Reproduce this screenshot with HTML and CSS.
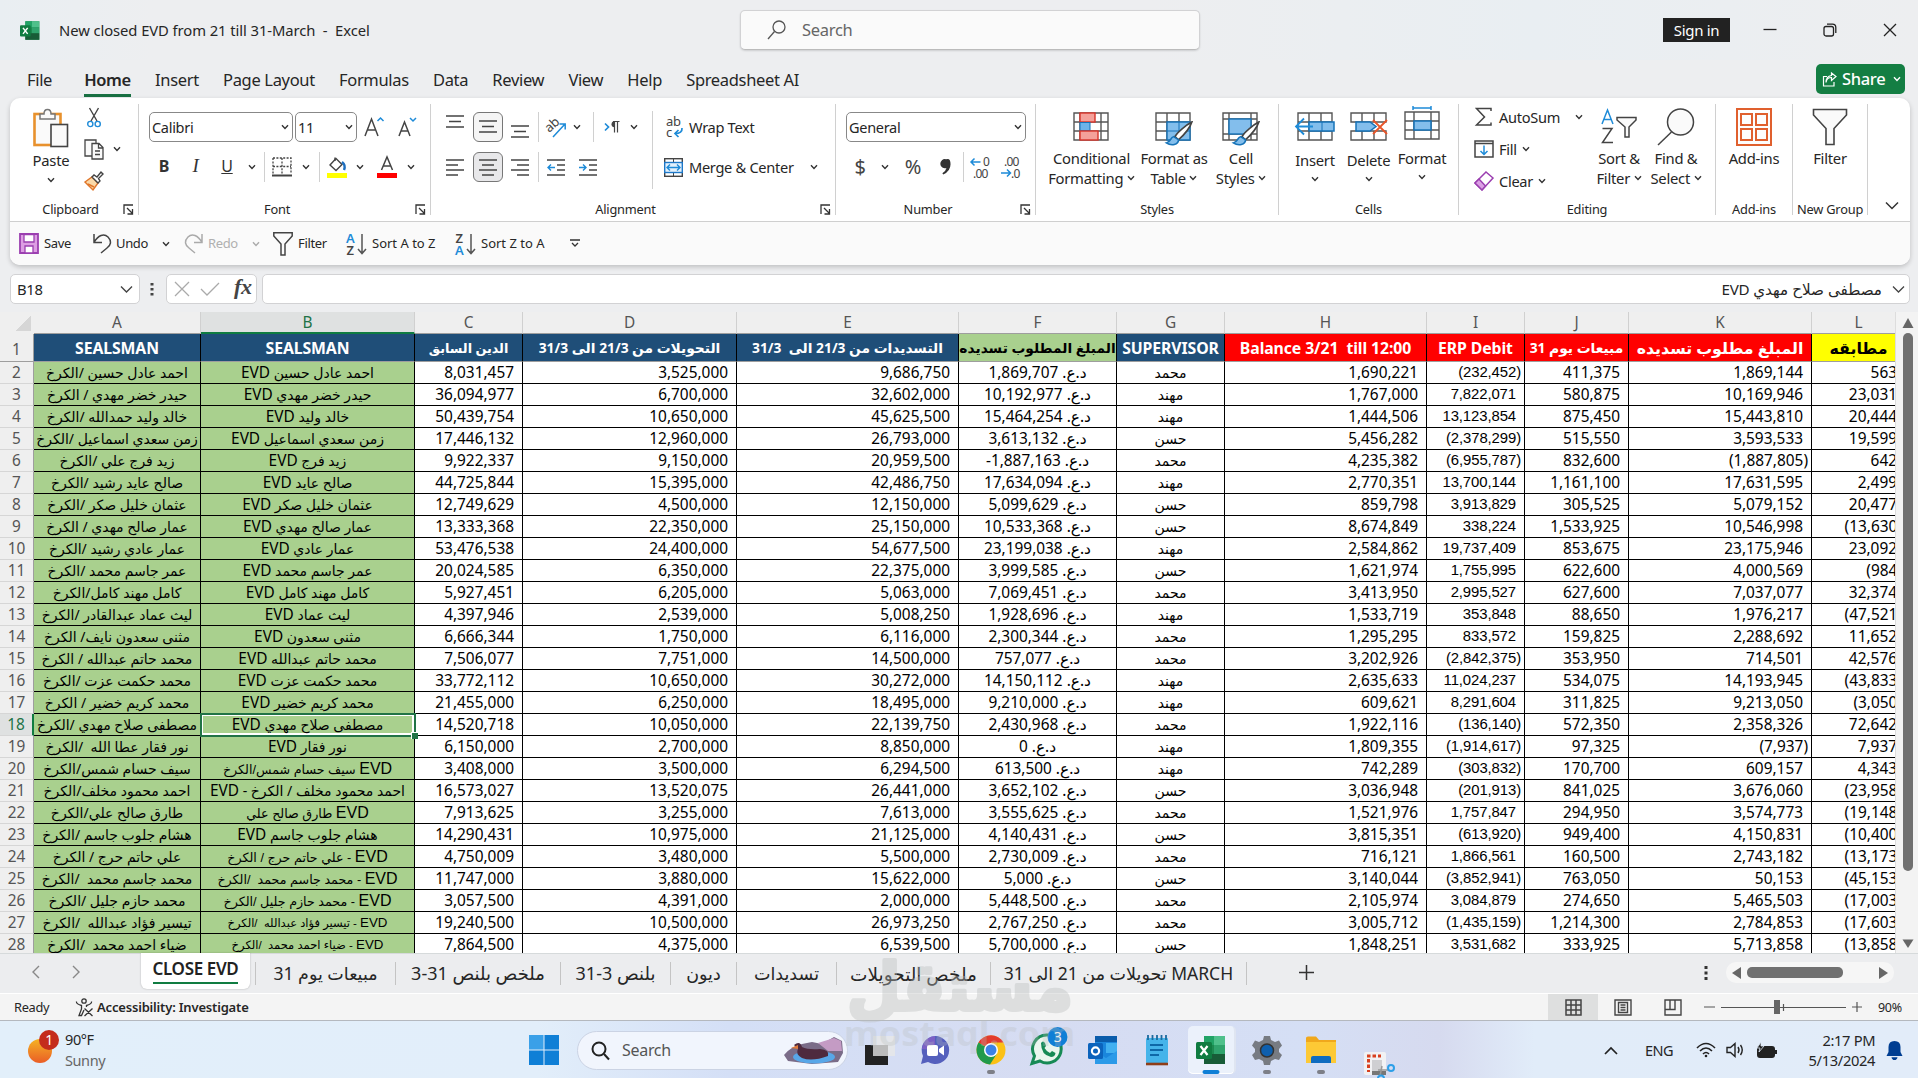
FILE: index.html
```html
<!DOCTYPE html>
<html lang="en">
<head>
<meta charset="utf-8">
<title>New closed EVD from 21 till 31-March - Excel</title>
<link rel="stylesheet" href="styles.css">
</head>
<body>
<svg class="defs" width="0" height="0">
  <symbol id="car" viewBox="0 0 8 6"><path d="M1 1.2 4 4.4 7 1.2" fill="none" stroke="currentColor" stroke-width="1.4"/></symbol>
  <symbol id="launch" viewBox="0 0 11 11"><path d="M1 10V1H10M4 4l5.500 5.500M9.500 5v5h-5" fill="none" stroke="#333" stroke-width="1.300"/></symbol>
  <symbol id="funnel" viewBox="0 0 36 38"><path d="M1.500 1.500H34.500V7L22 20.500V36.500H14V20.500L1.500 7Z" fill="#fafafa" stroke="#444" stroke-width="1.600"/></symbol>
  <symbol id="xl" viewBox="0 0 30 30"><path d="M8 1H29V29H8Z" fill="#1d8a50"/><path d="M18 1H29V10H18Z" fill="#4fc08b"/><path d="M8 1H18V10H8Z" fill="#21a366"/><path d="M18 10H29V19H18Z" fill="#2fa36c"/><path d="M8 19H29V29H8Z" fill="#185c37"/><rect x="0" y="7" width="16" height="17" rx="1.500" fill="#107c41"/><path d="M4.500 11 11.500 20M11.500 11 4.500 20" stroke="#fff" stroke-width="2.200"/></symbol>
  <symbol id="brush" viewBox="0 0 24 24"><path d="M23 1C18 4 11 11 9 15L12 18C16 14 21 8 23 1Z" fill="#fff" stroke="#444" stroke-width="1.500"/><path d="M8 15C5 16 6 20 2 21 6 24 12 23 12 18Z" fill="#83beec" stroke="#1673b8" stroke-width="1.400"/></symbol>
</svg>

<header class="titlebar">
  <svg class="app" width="20" height="21" viewBox="0 0 30 30"><use href="#xl"/></svg>
  <span class="doc">New closed EVD from 21 till 31-March&nbsp; -&nbsp; Excel</span>
  <div class="search"><svg width="20" height="20" viewBox="0 0 20 20" fill="none" stroke="#555" stroke-width="1.300"><circle cx="12" cy="7" r="6"/><path d="M7.500 11.500 1 19"/></svg><span>Search</span></div>
  <span class="signin">Sign in</span>
  <div class="winbtns">
    <svg width="14" height="14" viewBox="0 0 14 14"><path d="M.5 6.500H13.500" stroke="#222" stroke-width="1.300"/></svg>
    <svg width="14" height="14" viewBox="0 0 14 14" fill="none" stroke="#222" stroke-width="1.300"><rect x="1" y="3.500" width="9.500" height="9.500" rx="2"/><path d="M4 1.200H9.500Q12.800 1.200 12.800 4.500V10"/></svg>
    <svg width="14" height="14" viewBox="0 0 14 14"><path d="M1 1 13 13M13 1 1 13" stroke="#222" stroke-width="1.300"/></svg>
  </div>
</header>

<nav class="menu">
  <span class="file">File</span><span class="on">Home</span><span>Insert</span><span>Page Layout</span><span>Formulas</span><span>Data</span><span>Review</span><span>View</span><span>Help</span><span>Spreadsheet AI</span>
  <div class="share"><svg width="15" height="15" viewBox="0 0 15 15" fill="none" stroke="#fff" stroke-width="1.200"><path d="M5 4.500H1.500V14H12V10M4 10.500C4.500 7 7 5.500 9.500 5.500V8.500L14 4.500 9.500 1V3.500C6 4 4 6.500 4 10.500Z"/></svg><b>Share</b><svg class="car"><use href="#car"/></svg></div>
</nav>

<section class="ribbon">
  <div class="groups">
    <div class="group g-clip">
      <div class="body">
        <div class="big paste">
          <svg width="36" height="40" viewBox="0 0 36 40"><rect x="1.500" y="6" width="26" height="31" fill="#fafafa" stroke="#e8912d" stroke-width="2.600"/><path d="M7 11V6H11Q11 1.500 14.500 1.500T18 6H22V11Z" fill="#fafafa" stroke="#777" stroke-width="1.500"/><rect x="18" y="16.500" width="16.500" height="22" fill="#fafafa" stroke="#444" stroke-width="1.600"/></svg>
          <span>Paste</span><svg class="car"><use href="#car"/></svg>
        </div>
        <div class="clipcol">
          <svg width="14" height="21" viewBox="0 0 14 21" fill="none" stroke-width="1.400"><path d="M2.500 1 10 14M11.500 1 4 14" stroke="#444"/><circle cx="3.300" cy="17" r="2.600" stroke="#1e8bd8"/><circle cx="10.700" cy="17" r="2.600" stroke="#1e8bd8"/></svg>
          <svg width="20" height="21" viewBox="0 0 20 21" fill="#fafafa" stroke="#444" stroke-width="1.300"><path d="M8 17H1V1H12V4"/><path d="M8 4.500H15L19 8.500V20H8ZM14.500 4.500V9H19M11 12H16M11 15.500H16" /></svg>
          <svg width="20" height="20" viewBox="0 0 20 20" stroke-width="1.400"><path d="M1 11 8 6 14 12 9 19Z" fill="#fbd9a8" stroke="#e0762a"/><path d="M8 6 10 4 13 6 17 1 19 3 14.500 7.500 16 10 14 12Z" fill="#fff" stroke="#444"/><path d="M4 13 10 16" stroke="#e0762a"/></svg>
        </div>
        <svg class="car copycar"><use href="#car"/></svg>
      </div>
      <div class="label"><span>Clipboard</span><svg class="launch"><use href="#launch"/></svg></div>
    </div>

    <div class="group g-font">
      <div class="rows">
        <div class="r font1">
          <div class="combo"><span>Calibri</span><svg class="car"><use href="#car"/></svg></div>
          <div class="combo"><span>11</span><svg class="car"><use href="#car"/></svg></div>
          <svg width="20" height="22" viewBox="0 0 20 22" fill="none" stroke="#444" stroke-width="1.500"><path d="M1 20 7.500 3 14 20M3.500 14H11.500"/><path d="M13.500 5 16.500 2 19.500 5" stroke="#1e8bd8"/></svg>
          <svg width="20" height="22" viewBox="0 0 20 22" fill="none" stroke="#444" stroke-width="1.500"><path d="M2 20 7.500 6 13 20M4 15H11"/><path d="M13 2 16 5 19 2" stroke="#1e8bd8"/></svg>
        </div>
        <div class="r font2">
          <b class="ch">B</b><i class="ch it">I</i><u class="ch">U</u><svg class="car"><use href="#car"/></svg><i class="sep"></i>
          <svg width="20" height="20" viewBox="0 0 20 20" fill="none" stroke="#444"><path d="M1 1H19V17M1 1V17M10 1V17M1 9.500H19" stroke-dasharray="2 1.400" stroke-width="1.300"/><path d="M0 18.500H20" stroke-width="2"/></svg>
          <svg class="car"><use href="#car"/></svg><i class="sep"></i>
          <svg width="20" height="22" viewBox="0 0 20 22"><path d="M3 9 9 2.500 15 8.500 9 14.500Z" fill="#fff" stroke="#444" stroke-width="1.400"/><path d="M8 5V1.500" stroke="#444" stroke-width="1.400"/><path d="M15 6Q19 9 17 14" stroke="#1e6fbf" stroke-width="2.400" fill="none"/><rect y="17" width="20" height="5" fill="#ff0"/></svg>
          <svg class="car"><use href="#car"/></svg>
          <svg width="20" height="22" viewBox="0 0 20 22"><path d="M4.500 14 10 1 15.500 14M6.500 10H13.500" fill="none" stroke="#444" stroke-width="1.500"/><rect y="17" width="20" height="5" fill="#f00"/></svg>
          <svg class="car"><use href="#car"/></svg>
        </div>
      </div>
      <div class="label"><span>Font</span><svg class="launch"><use href="#launch"/></svg></div>
    </div>

    <div class="group g-align">
      <div class="body">
        <div class="rows">
          <div class="r al1">
            <svg class="up" width="18" height="14" viewBox="0 0 18 14"><path d="M0 1H18M3 6.500H15M0 12H18" stroke="#444" stroke-width="1.500"/></svg>
            <div class="pressed lite"><svg width="18" height="14" viewBox="0 0 18 14"><path d="M0 1H18M3 6.500H15M0 12H18" stroke="#444" stroke-width="1.500"/></svg></div>
            <svg class="down" width="18" height="14" viewBox="0 0 18 14"><path d="M0 1H18M3 6.500H15M0 12H18" stroke="#444" stroke-width="1.500"/></svg>
            <i class="sep"></i>
            <svg width="22" height="20" viewBox="0 0 22 20"><text x="0" y="13" font-size="13" fill="#444" transform="rotate(-42 6 9)">ab</text><path d="M8 20 20 7M14.500 7H20.200V12.500" fill="none" stroke="#1e8bd8" stroke-width="1.500"/></svg>
            <svg class="car"><use href="#car"/></svg><i class="sep"></i>
            <svg width="16" height="14" viewBox="0 0 16 14"><path d="M1 3.500 4.500 7 1 10.500" fill="none" stroke="#1e8bd8" stroke-width="1.700"/><path d="M13.500 1.500V12.500M10.500 1.500V12.500M9 1.500H15.500" fill="none" stroke="#444" stroke-width="1.200"/><path d="M10.500 1.200A3 3 0 0 0 10.500 7.200Z" fill="#444"/></svg>
            <svg class="car"><use href="#car"/></svg>
          </div>
          <div class="r al2">
            <svg width="18" height="17" viewBox="0 0 18 17"><path d="M0 1H18M0 6H12M0 11H18M0 16H12" stroke="#444" stroke-width="1.400"/></svg>
            <div class="pressed"><svg width="18" height="17" viewBox="0 0 18 17"><path d="M0 1H18M3 6H15M0 11H18M3 16H15" stroke="#444" stroke-width="1.400"/></svg></div>
            <svg width="18" height="17" viewBox="0 0 18 17"><path d="M0 1H18M6 6H18M0 11H18M6 16H18" stroke="#444" stroke-width="1.400"/></svg>
            <i class="sep"></i>
            <svg width="18" height="17" viewBox="0 0 18 17" fill="none"><path d="M0 1H18M10 6H18M10 11H18M0 16H18" stroke="#444" stroke-width="1.400"/><path d="M8 8.500H1M4 5.500 1 8.500 4 11.500" stroke="#1e8bd8" stroke-width="1.400"/></svg>
            <svg width="18" height="17" viewBox="0 0 18 17" fill="none"><path d="M0 1H18M10 6H18M10 11H18M0 16H18" stroke="#444" stroke-width="1.400"/><path d="M0 8.500H7M4 5.500 7 8.500 4 11.500" stroke="#1e8bd8" stroke-width="1.400"/></svg>
          </div>
        </div>
        <div class="rows wrapcol">
          <div class="r"><svg class="wrapic" width="17" height="22" viewBox="0 0 17 22"><text x="0" y="9.500" font-size="13" fill="#444">ab</text><text x="0" y="21" font-size="13" fill="#444">c</text><path d="M16 12Q16.500 17.500 9 17.500M12.500 14 9 17.500 12.500 21" fill="none" stroke="#1e8bd8" stroke-width="1.700"/></svg><span>Wrap Text</span></div>
          <div class="r"><svg width="19" height="19" viewBox="0 0 19 19"><rect x=".7" y=".7" width="17.600" height="17.600" fill="#fff" stroke="#444" stroke-width="1.400"/><path d="M9.500 1V4M9.500 15V18" stroke="#444"/><rect x=".7" y="4.500" width="17.600" height="10" fill="#e3f1fc" stroke="#1e78c8" stroke-width="1.400"/><path d="M3 9.500H16M6 6.500 3 9.500 6 12.500M13 6.500 16 9.500 13 12.500" fill="none" stroke="#1e8bd8" stroke-width="1.400"/></svg><span>Merge &amp; Center</span><svg class="car"><use href="#car"/></svg></div>
        </div>
      </div>
      <div class="label"><span>Alignment</span><svg class="launch"><use href="#launch"/></svg></div>
    </div>

    <div class="group g-num">
      <div class="rows">
        <div class="r num1"><div class="combo"><span>General</span><svg class="car"><use href="#car"/></svg></div></div>
        <div class="r num2">
          <span class="sym">$</span><svg class="car"><use href="#car"/></svg><span class="sym">%</span>
          <svg width="10" height="16" viewBox="0 0 11 17"><path d="M5.500 0A5 5 0 1 0 6 9.500Q5 13.500 1.500 15.500L2.500 16.800Q10.500 13 10.500 5.500T5.500 0Z" fill="#333"/></svg>
          <i class="sep"></i>
          <svg width="20" height="22" viewBox="0 0 20 22"><path d="M10.500 6H1M4.500 2.500 1 6 4.500 9.500" fill="none" stroke="#1e8bd8" stroke-width="1.500"/><text x="13" y="10" class="dec">0</text><text x="3" y="21.500" class="dec">.00</text></svg>
          <svg width="20" height="22" viewBox="0 0 20 22"><path d="M0 17H9.500M6 13.500 9.500 17 6 20.500" fill="none" stroke="#1e8bd8" stroke-width="1.500"/><text x="3" y="10" class="dec">.00</text><text x="10" y="21.500" class="dec">.0</text></svg>
        </div>
      </div>
      <div class="label"><span>Number</span><svg class="launch"><use href="#launch"/></svg></div>
    </div>

    <div class="group g-styles">
      <div class="body bigs">
        <div class="big"><svg width="36" height="34" viewBox="0 0 36 34"><path d="M1 1H35V28H1ZM1 10H35M1 19H35M7 1V28M28 1V28" fill="#fff" stroke="#555" stroke-width="1.400"/><rect x="7" y="1" width="15" height="9" fill="#f4a19a" stroke="#d8342a" stroke-width="1.400"/><rect x="7" y="10.500" width="10" height="8" fill="#6db3ea" stroke="#1673b8"/><rect x="7" y="19" width="18" height="9" fill="#f4a19a" stroke="#d8342a" stroke-width="1.400"/></svg><span>Conditional<br>Formatting <svg class="car"><use href="#car"/></svg></span></div>
        <div class="big"><svg width="38" height="34" viewBox="0 0 38 34"><path d="M1 1H35V28H1ZM1 10H35M1 19H35M12 1V28M24 1V28" fill="#fff" stroke="#555" stroke-width="1.400"/><path d="M12 10H35V28H12Z" fill="#83beec" stroke="#1673b8" stroke-width="1.400"/><path d="M12 19H35M24 10V28" stroke="#1673b8"/><svg x="9" y="9" width="29" height="25" viewBox="0 0 24 24" preserveAspectRatio="none"><use href="#brush"/></svg></svg><span>Format as<br>Table <svg class="car"><use href="#car"/></svg></span></div>
        <div class="big"><svg width="38" height="34" viewBox="0 0 38 34"><path d="M1 1H35V28H1ZM1 7H35M1 22H35M7 1V28M29 1V28" fill="#fff" stroke="#555" stroke-width="1.400"/><rect x="7" y="7" width="22" height="15" fill="#83beec" stroke="#1673b8" stroke-width="1.400"/><svg x="9" y="9" width="29" height="25" viewBox="0 0 24 24" preserveAspectRatio="none"><use href="#brush"/></svg></svg><span>Cell<br>Styles <svg class="car"><use href="#car"/></svg></span></div>
      </div>
      <div class="label"><span>Styles</span></div>
    </div>

    <div class="group g-cells">
      <div class="body bigs">
        <div class="big drop"><svg width="40" height="34" viewBox="0 0 40 34"><path d="M3 1H37V28H3ZM3 10H37M3 19H37M14 1V28M26 1V28" fill="#fff" stroke="#555" stroke-width="1.400"/><rect x="14" y="10" width="25" height="9" fill="#83beec" stroke="#1673b8" stroke-width="1.500"/><path d="M27 10V19" stroke="#1673b8"/><path d="M18 14.500H1M9 6.500 1 14.500 9 22.500" fill="none" stroke="#1e8bd8" stroke-width="1.800"/></svg><span>Insert</span><svg class="car"><use href="#car"/></svg></div>
        <div class="big drop"><svg width="38" height="34" viewBox="0 0 38 34"><path d="M1 10V1H36V10ZM1 19V28H36V19ZM12 1V10M24 1V10M12 19V28M24 19V28" fill="#fff" stroke="#555" stroke-width="1.400"/><path d="M6 10H20L26 14.500 20 19H6Z" fill="#83beec" stroke="#1673b8" stroke-width="1.500"/><path d="M23 8 37 22M37 8 23 22" stroke="#e8562a" stroke-width="1.800"/></svg><span>Delete</span><svg class="car"><use href="#car"/></svg></div>
        <div class="big fmt"><svg width="36" height="38" viewBox="0 0 36 38"><path d="M9 2H27M9 0V4M27 0V4" stroke="#1e8bd8" stroke-width="1.500"/><path d="M1 6H35V33H1ZM1 15H35M1 24H35M10 6V33M27 6V33" fill="#fff" stroke="#555" stroke-width="1.400"/><rect x="10" y="15" width="17" height="9" fill="#83beec" stroke="#1673b8" stroke-width="1.500"/></svg><span>Format</span><svg class="car"><use href="#car"/></svg></div>
      </div>
      <div class="label"><span>Cells</span></div>
    </div>

    <div class="group g-edit">
      <div class="body">
        <div class="edits">
          <div><svg width="20" height="20" viewBox="0 0 20 20"><path d="M17 4V1.500H2.500L10.500 10 2.500 18H17V15.500" fill="none" stroke="#444" stroke-width="1.500"/></svg><span>AutoSum</span><svg class="car far"><use href="#car"/></svg></div>
          <div><svg width="20" height="18" viewBox="0 0 20 18"><rect x="1" y="1" width="18" height="16" fill="#fff" stroke="#444" stroke-width="1.500"/><path d="M1 3.500H19" stroke="#444" stroke-width="1.500"/><path d="M10 5.500V14M6.500 11 10 14.500 13.500 11" fill="none" stroke="#1e8bd8" stroke-width="1.500"/></svg><span>Fill</span><svg class="car"><use href="#car"/></svg></div>
          <div><svg width="20" height="20" viewBox="0 0 20 20"><path d="M1 12 12 1 19 7 8 19Z" fill="#fff" stroke="#9b3fb0" stroke-width="1.500"/><path d="M1 12 5 8 11.500 15 8 19Z" fill="#dba0e4" stroke="#9b3fb0" stroke-width="1.500"/></svg><span>Clear</span><svg class="car"><use href="#car"/></svg></div>
        </div>
        <div class="big"><svg width="36" height="38" viewBox="0 0 36 38"><path d="M1 16 6.500 2 12 16M3 11.500H10" fill="none" stroke="#1e8bd8" stroke-width="1.500"/><path d="M1.500 20.500H11L1.500 34.500H12" fill="none" stroke="#444" stroke-width="1.500"/><path d="M16 9.500H35V12L28 19V29H24V19L16 12Z" fill="#fafafa" stroke="#444" stroke-width="1.500"/></svg><span>Sort &amp;<br>Filter <svg class="car"><use href="#car"/></svg></span></div>
        <div class="big"><svg width="38" height="38" viewBox="0 0 38 38" fill="#fafafa" stroke="#444" stroke-width="1.500"><circle cx="23.500" cy="14" r="13"/><path d="M14.500 24 1 37"/></svg><span>Find &amp;<br>Select <svg class="car"><use href="#car"/></svg></span></div>
      </div>
      <div class="label"><span>Editing</span></div>
    </div>

    <div class="group g-add">
      <div class="body"><div class="big tall"><svg width="36" height="38" viewBox="0 0 36 38" fill="#fdfdfd" stroke="#e0602e"><rect x="1" y="1" width="34" height="36" stroke-width="2"/><path d="M5 6H16V17H5ZM20 6H31V17H20ZM5 21H16V32H5ZM20 21H31V32H20Z" stroke-width="2"/></svg><span>Add-ins</span></div></div>
      <div class="label"><span>Add-ins</span></div>
    </div>
    <div class="group g-new">
      <div class="body"><div class="big tall"><svg width="36" height="38"><use href="#funnel"/></svg><span>Filter</span></div></div>
      <div class="label"><span>New Group</span></div>
    </div>
    <div class="collapse"><svg width="14" height="10" viewBox="0 0 14 10"><path d="M1 1.500 7 7.500 13 1.500" fill="none" stroke="#333" stroke-width="1.500"/></svg></div>
  </div>

  <div class="qat">
    <svg width="20" height="21" viewBox="0 0 20 21"><path d="M1 1H19V20H1Z" fill="#dd9ee3" stroke="#9b3fb0" stroke-width="1.800"/><path d="M5 1.500H15V9H5Z" fill="#fff" stroke="#9b3fb0" stroke-width="1.300"/><path d="M6 20V13H14V20Z" fill="#fff" stroke="#9b3fb0" stroke-width="1.300"/></svg><span class="q1">Save</span>
    <svg width="18" height="21" viewBox="0 0 18 21"><path d="M1 1V9.500H9M1 9.500C5 2 11 0 15 4S18 12 14 15L8 20" fill="none" stroke="#444" stroke-width="1.500"/></svg><span class="q2">Undo</span><svg class="car qc1"><use href="#car"/></svg>
    <svg class="dim" width="18" height="21" viewBox="0 0 18 21"><path d="M17 1V9.500H9M17 9.500C13 2 7 0 3 4S0 12 4 15L10 20" fill="none" stroke="#aaa" stroke-width="1.500"/></svg><span class="q3">Redo</span><svg class="car qc2"><use href="#car"/></svg>
    <svg width="20" height="24" viewBox="0 0 20 24"><path d="M.8.8H19.200V4L12 12V23H8V12L.8 4Z" fill="#fafafa" stroke="#444" stroke-width="1.500"/></svg><span class="q4">Filter</span>
    <svg width="21" height="22" viewBox="0 0 21 22"><text x="0" y="10" class="az blue">A</text><text x="0.500" y="22" class="az">Z</text><path d="M16 1V20M12 16 16 20.500 20 16" fill="none" stroke="#555" stroke-width="1.500"/></svg><span class="q5">Sort A to Z</span>
    <svg width="21" height="22" viewBox="0 0 21 22"><text x="0.500" y="10" class="az">Z</text><text x="0" y="22" class="az blue">A</text><path d="M16 1V20M12 16 16 20.500 20 16" fill="none" stroke="#555" stroke-width="1.500"/></svg><span class="q6">Sort Z to A</span>
    <svg width="10" height="9" viewBox="0 0 10 9"><path d="M0 1H10M2 4 5 7 8 4" fill="none" stroke="#333" stroke-width="1.300"/></svg>
  </div>
</section>

<section class="fbar">
  <div class="namebox"><span>B18</span><svg width="13" height="9" viewBox="0 0 13 9"><path d="M1 1.500 6.500 7 12 1.500" fill="none" stroke="#444" stroke-width="1.400"/></svg></div>
  <svg class="dots" width="4" height="14" viewBox="0 0 4 14"><path d="M.5 1h3v2.500h-3zM.5 6h3v2.500h-3zM.5 11h3v2.500h-3z" fill="#444"/></svg>
  <div class="fxbox"><svg width="16" height="16" viewBox="0 0 16 16"><path d="M1 1 15 15M15 1 1 15" stroke="#aaa" stroke-width="1.300"/></svg><svg width="20" height="14" viewBox="0 0 20 14"><path d="M1 7 7 13 19 1" fill="none" stroke="#aaa" stroke-width="1.300"/></svg><i>fx</i></div>
  <div class="formula"><span dir="rtl">مصطفى صلاح مهدي EVD</span><svg width="13" height="9" viewBox="0 0 13 9"><path d="M1 1.500 6.500 7 12 1.500" fill="none" stroke="#444" stroke-width="1.300"/></svg></div>
</section>

<main class="work">
  <div class="sheet" id="sheet"></div>
  <div class="vscroll">
    <svg width="12" height="11" viewBox="0 0 12 11"><path d="M6 0 11.500 10H.5Z" fill="#666"/></svg>
    <i></i>
    <svg class="dn" width="12" height="10" viewBox="0 0 12 10"><path d="M6 9 11.500 .5H.5Z" fill="#666"/></svg>
  </div>
</main>

<section class="tabs">
  <div class="nav"><svg width="8" height="14" viewBox="0 0 8 14"><path d="M7 1 1 7 7 13" fill="none" stroke="#888" stroke-width="1.400"/></svg><svg width="8" height="14" viewBox="0 0 8 14"><path d="M1 1 7 7 1 13" fill="none" stroke="#888" stroke-width="1.400"/></svg></div>
  <div class="tab cur"><span>CLOSE EVD</span></div>
  <div class="tab t1" dir="rtl">مبيعات يوم 31</div>
  <div class="tab t2" dir="rtl">ملخص بلنص 31-3</div>
  <div class="tab t3" dir="rtl">بلنص 3-31</div>
  <div class="tab t4" dir="rtl">ديون</div>
  <div class="tab t5" dir="rtl">تسديدات</div>
  <div class="tab t6" dir="rtl">ملخص التحويلات</div>
  <div class="tab t7" dir="rtl">MARCH تحويلات من 21 الى 31</div>
  <svg class="plus" width="15" height="15" viewBox="0 0 15 15"><path d="M7.500 0V15M0 7.500H15" stroke="#333" stroke-width="1.500"/></svg>
  <svg class="vdots" width="4" height="14" viewBox="0 0 4 14"><path d="M.5 0h3v3h-3zM.5 5.500h3v3h-3zM.5 11h3v3h-3z" fill="#333"/></svg>
  <div class="hscroll"><svg width="9" height="12" viewBox="0 0 9 12"><path d="M0 6 9 0V12Z" fill="#666"/></svg><i></i><svg width="9" height="12" viewBox="0 0 9 12"><path d="M9 6 0 0V12Z" fill="#666"/></svg></div>
</section>

<section class="status">
  <span class="ready">Ready</span>
  <svg width="19" height="19" viewBox="0 0 19 19" fill="none" stroke="#333" stroke-width="1.300"><circle cx="9" cy="3" r="2.200"/><path d="M1.500 3.500Q1 6 6.500 7.500V11L4 17.500H6.500L9 12M16.500 3.500Q17 6 11.500 7.500V9M9.500 10.500 17.500 18M17.500 10.500 9.500 18"/></svg>
  <b>Accessibility: Investigate</b>
  <div class="views">
    <div class="v on"><svg width="17" height="17" viewBox="0 0 17 17"><path d="M1 1H16V16H1ZM1 6H16M1 11H16M6 1V16M11 1V16" fill="none" stroke="#444" stroke-width="1.500"/></svg></div>
    <div class="v"><svg width="18" height="17" viewBox="0 0 18 17" fill="none" stroke="#444" stroke-width="1.400"><path d="M1 1H17V16H1Z"/><path d="M4.500 3.500H13.500V13.500H4.500ZM6.500 6H11.500M6.500 8.500H11.500M6.500 11H11.500"/></svg></div>
    <div class="v"><svg width="18" height="17" viewBox="0 0 18 17" fill="none" stroke="#444" stroke-width="1.400"><path d="M1 1H17V16H1ZM1 10.500H11V1M6 1V10.500"/></svg></div>
  </div>
  <svg class="zoom" width="158" height="16" viewBox="0 0 158 16"><path d="M0 8H11M17 8.500H142M79.500 5V12M148 8H158M153 3V13" stroke="#555" stroke-width="1.200"/><rect x="70" y="1" width="6" height="14" fill="#666"/></svg>
  <span class="pct">90%</span>
</section>

<footer class="taskbar">
  <div class="weather">
    <svg width="32" height="36" viewBox="0 0 32 36"><defs><linearGradient id="sun" x1="0" y1="0" x2="0" y2="1"><stop offset="0" stop-color="#f5b324"/><stop offset="1" stop-color="#ea5d26"/></linearGradient></defs><circle cx="12" cy="22" r="12" fill="url(#sun)"/><circle cx="21" cy="11" r="10" fill="#c42b1c"/><text x="21" y="16" font-size="14" fill="#fff" text-anchor="middle">1</text></svg>
    <div><span>90°F</span><span class="sub">Sunny</span></div>
  </div>
  <div class="apps">
    <svg class="start" width="30" height="30" viewBox="0 0 30 30"><path d="M0 0H14.500V14.500H0Z" fill="#3aa0e8"/><path d="M15.500 0H30V14.500H15.500ZM0 15.500H14.500V30H0ZM15.500 15.500H30V30H15.500Z" fill="#0f7fd6"/></svg>
    <div class="tsearch"><svg width="19" height="19" viewBox="0 0 19 19" fill="none" stroke="#222" stroke-width="2"><circle cx="8" cy="8" r="6.500"/><path d="M13 13 18 18.500"/></svg><span>Search</span>
      <svg width="62" height="30" viewBox="0 0 62 30"><path d="M2 20Q8 12 20 9L30 7 40 9 52 2 60 6 61 18 56 27 30 29 6 26Z" fill="#7a6c88"/><path d="M36 8 52 3 59 6 60 16 46 16Z" fill="#c49bc4"/><ellipse cx="32" cy="22" rx="21" ry="6.500" fill="#58a7e8"/><path d="M12 10Q18 5 20 12 26 15 38 14 48 15 46 21 30 27 20 23 13 19 16 14Z" fill="#4e2a3e"/><path d="M16 10 9 13 16 14Z" fill="#e07b3c"/></svg></div>
    <svg class="k" width="30" height="30" viewBox="0 0 30 30"><rect x="0" y="10" width="23" height="20" fill="#222"/><rect x="8" y="1" width="22" height="20" fill="#e4e6ea"/><rect x="8" y="10" width="15" height="11" fill="#bbb"/></svg>
    <svg class="k k2" width="30" height="30" viewBox="0 0 30 30"><path d="M15 1A14 14 0 1 1 8 27L1 29 3 21A14 14 0 0 1 15 1Z" fill="#5560bd"/><path d="M15 1A14 14 0 0 0 2 14L15 15Z" fill="#8d63c9" opacity=".7"/><rect x="7" y="10" width="11" height="11" rx="2" fill="#fff"/><path d="M19 14 24 10.500V20.500L19 17Z" fill="#fff"/></svg>
    <svg class="k" width="30" height="30" viewBox="0 0 30 30"><circle cx="15" cy="15" r="14.500" fill="#fbc116"/><path d="M15 15 2.500 7.500A14.500 14.500 0 0 1 27.500 7.500H15Z" fill="#e33b2e"/><path d="M2.500 7.500A14.500 14.500 0 0 0 14 29.500L21 18.500 15 15Z" fill="#209a4c"/><circle cx="15" cy="15" r="7" fill="#fff"/><circle cx="15" cy="15" r="5.500" fill="#3b82e6"/><rect x="11" y="35" width="8" height="4" rx="2" fill="#7d7f87"/></svg>
    <svg class="k wa" width="38" height="38" viewBox="0 0 38 38"><path d="M17 8A14 14 0 1 1 10 34L2 36.500 4.500 29A14 14 0 0 1 17 8Z" fill="#eaf6ee" stroke="#178a55" stroke-width="3"/><path d="M11 16Q13 13 15 16L16 19 14.500 21Q17 25 20 26L22 24 25.500 26Q25 30 21 30 11 28 11 16Z" fill="#178a55"/><circle cx="27.500" cy="10" r="10" fill="#0f7fd6"/><text x="27.500" y="15" font-size="14" fill="#fff" text-anchor="middle">3</text></svg>
    <svg class="k" width="30" height="30" viewBox="0 0 30 30"><path d="M7 1H29V29H7Z" fill="#1a86dc"/><path d="M7 1H29V7H7Z" fill="#0a5cab"/><path d="M18 8H29V18H18Z" fill="#42b0f0"/><path d="M7 16 18 23 29 16V29H7Z" fill="#2b9ae8"/><rect x="0" y="8" width="15" height="16" rx="1.500" fill="#0b63bc"/><circle cx="7.500" cy="16" r="3.600" fill="none" stroke="#fff" stroke-width="2.200"/></svg>
    <svg class="k note" width="24" height="31" viewBox="0 0 24 31"><rect x="1" y="3" width="22" height="25" rx="1" fill="#45b4ea"/><path d="M3 0V5M7.500 0V5M12 0V5M16.500 0V5M21 0V5" stroke="#1b6a9e" stroke-width="1.800"/><path d="M5 10H18M5 15H18M5 20H14" stroke="#0e68a8" stroke-width="1.800"/><path d="M1 29H23" stroke="#8f3e18" stroke-width="2.600"/></svg>
    <div class="active"><svg width="30" height="30" viewBox="0 0 30 30"><use href="#xl" width="30" height="30"/><rect x="6.500" y="35" width="17" height="4" rx="2" fill="#0f7fd6"/></svg></div>
    <svg class="k" width="30" height="30" viewBox="0 0 30 30"><path d="M12 1h6l1 4 4 2 4-1.500 3 5L27 14v3l3 3-3 5-4-1-4 2-1 4h-6l-1-4-4-2-4 1-3-5 3-3v-3L0 10.500l3-5L7 7l4-2Z" fill="#777b82"/><circle cx="15" cy="15.500" r="6.500" fill="#0e5fae" stroke="#333" stroke-width="1.500"/><rect x="11" y="35" width="8" height="4" rx="2" fill="#7d7f87"/></svg>
    <svg class="k exp" width="30" height="28" viewBox="0 0 30 28"><path d="M0 2Q0 .5 2 .5H10L13 4H30V27H0Z" fill="#f0a81c"/><path d="M0 6H30V27H0Z" fill="#fdc935"/><path d="M5 27V22Q5 20 7 20H23Q25 20 25 22V27Z" fill="#0f6cc0"/><rect x="11" y="34" width="8" height="4" rx="2" fill="#7d7f87"/></svg>
    <svg class="k snip" width="31" height="27" viewBox="0 0 31 27"><rect x="0" y="0" width="22" height="23" rx="2" fill="#f2f2f4"/><path d="M3 4H17" stroke="#d8401f" stroke-width="3" stroke-dasharray="3.500 2"/><path d="M4.500 7V20" stroke="#d8401f" stroke-width="3" stroke-dasharray="3.500 2"/><path d="M8 8H18V20H8Z" fill="#cfcfd2"/><path d="M8 21H22" stroke="#777" stroke-width="4"/><path d="M16 24 18 14M14 18H24" stroke="#999" stroke-width="1.500"/><circle cx="27" cy="16" r="3" fill="none" stroke="#2c9fe8" stroke-width="2"/><circle cx="17" cy="26.500" r="3" fill="none" stroke="#2c9fe8" stroke-width="2"/></svg>
  </div>
  <div class="tray">
    <svg width="14" height="9" viewBox="0 0 14 9"><path d="M1 8 7 2 13 8" fill="none" stroke="#222" stroke-width="1.700"/></svg>
    <span class="eng">ENG</span>
    <svg width="20" height="16" viewBox="0 0 20 16" fill="none" stroke="#222" stroke-width="1.600"><path d="M1 6Q10-3 19 6M4 9Q10 3 16 9M7 12Q10 9 13 12"/><circle cx="10" cy="14" r="1.300" fill="#222" stroke="none"/></svg>
    <svg width="20" height="16" viewBox="0 0 20 16" fill="none" stroke="#222" stroke-width="1.400"><path d="M1 5.500H4.500L9 1.500V14.500L4.500 10.500H1ZM12 5Q14 8 12 11M14.500 3Q18 8 14.500 13"/></svg>
    <svg width="21" height="17" viewBox="0 0 21 17"><rect x="2" y="5" width="16" height="10" rx="2" fill="#222" stroke="#222" stroke-width="2"/><path d="M19 8h2v4h-2z" fill="#222"/><path d="M5 0 1 6H4L3 10 8 4H5Z" fill="#222" stroke="#e2ecf9" stroke-width=".8"/></svg>
    <div class="clock"><span>2:17 PM</span><span>5/13/2024</span></div>
    <svg width="17" height="19" viewBox="0 0 17 19"><path d="M8.500 0Q14.500 0 14.500 6V11L16.500 15H.5L2.500 11V6Q2.500 0 8.500 0ZM5.500 16.200H11.500Q11 19 8.500 19T5.500 16.200Z" fill="#003e92"/></svg>
  </div>
</footer>

<svg class="mark" width="240" height="110" viewBox="0 0 240 110">
  <text x="6" y="60" textLength="226" lengthAdjust="spacingAndGlyphs" class="m-ar">مستقل</text>
  <text x="3" y="96" textLength="231" lengthAdjust="spacingAndGlyphs" class="m-en">mostaql.com</text>
</svg>
<script src="sheet.js"></script>
</body>
</html>
```
FILE: styles.css
```css
* { box-sizing: border-box; }
body { margin: 0; width: 1918px; height: 1078px; overflow: hidden; display: flex; flex-direction: column; background: #edeef0; color: #262626; font-family: "Noto Sans", "Open Sans", "DejaVu Sans", sans-serif; font-size: 15px; letter-spacing: -0.3px; position: relative; }
svg { display: block; flex: none; overflow: visible; }
.defs { position: absolute; }
.car { width: 8px; height: 6px; color: #333; }
.launch { width: 11px; height: 11px; }

.titlebar { height: 60px; flex: none; display: flex; align-items: center; padding-left: 20px; background: linear-gradient(90deg, #e9eef2, #edeef0 8%, #edeef0 60%, #e9eef2 80%, #edeef0); }
.doc { margin-left: 19px; width: 681px; font-size: 14.800px; letter-spacing: -0.080px; white-space: pre; }
.search { width: 460px; height: 40px; background: #fafafa; border: 1px solid #d2d2d4; border-bottom-color: #bbb; border-radius: 5px; display: flex; align-items: center; gap: 15px; padding-left: 26px; font-size: 16.500px; color: #666; box-shadow: 0 1px 2px #0002; }
.search span { margin-top: -2px; }
.signin { margin-left: 463px; width: 67px; height: 24px; background: #222; color: #fff; text-align: center; font-size: 15px; line-height: 24px; letter-spacing: -0.300px; }
.winbtns { display: flex; gap: 46px; margin-left: 33px; }

.menu { height: 38px; flex: none; display: flex; align-items: flex-start; font-size: 16.500px; padding: 7px 13px 0 27px; gap: 24.200px; letter-spacing: -0.330px; line-height: 26px; white-space: nowrap; }
.menu > span { height: 30px; }
.menu .file { margin-right: 8px; }
.menu .on { font-weight: 600; border-bottom: 3px solid #197043; letter-spacing: -0.400px; }
.share { margin: -3px 0 0 auto; width: 89px; height: 30px; background: #147e43; border-radius: 5px; color: #fff; display: flex; align-items: center; gap: 5px; padding-left: 6px; }
.share b { font-weight: 500; width: 44px; }
.share .car { color: #fff; margin-left: 2px; }

.ribbon { margin-left: 10px; width: 1900px; height: 167px; flex: none; background: #fff; border-radius: 10px; overflow: hidden; box-shadow: 0 2px 5px #0003; }
.groups { height: 124px; display: flex; padding-top: 6px; border-bottom: 1px solid #cfcfcf; }
.group { height: 111px; border-right: 1px solid #d0d0d0; display: flex; flex-direction: column; justify-content: space-between; }
.label { height: 12px; display: flex; align-items: center; font-size: 12.800px; line-height: 12px; letter-spacing: -0.200px; white-space: nowrap; }
.label span { flex: 1; text-align: center; }
.label .launch { margin-right: 4px; }
.body { display: flex; height: 92px; }
.rows { display: flex; flex-direction: column; gap: 10px; padding-top: 8px; }
.r { height: 30px; display: grid; align-items: center; justify-items: center; }
.sep { width: 1px; height: 30px; background: #d0d0d0; }
.combo { width: 100%; height: 30px; border: 1px solid #888; border-radius: 5px; display: flex; align-items: center; justify-content: space-between; padding: 0 3px 0 2px; font-size: 14.500px; }
.pressed { width: 30px; height: 30px; border: 1px solid #777; border-radius: 6px; background: #e8e8ea; display: grid; place-items: center; }
.lite { background: #f5f5f5; }
.big { display: flex; flex-direction: column; align-items: center; text-align: center; font-size: 14.800px; line-height: 20px; letter-spacing: -0.250px; white-space: nowrap; padding-top: 8px; }
.big span { margin-top: 2px; }
.big span .car { display: inline-block; vertical-align: 3px; }
.big.tall, .g-edit .big { padding-top: 4px; }
.big.tall span, .g-edit .big span { margin-top: 2px; }
.big.drop span { margin-top: 4px; }
.drop > .car, .fmt > .car { margin-top: 6px; }
.big.fmt { padding-top: 2px; }
.big.fmt span { margin-top: 4px; }

.g-clip { width: 129px; }
.paste { width: 62px; padding: 4px 0 0 20px; }
.paste > .car { margin-top: 7px; }
.clipcol { width: 44px; display: flex; flex-direction: column; align-items: center; gap: 11px; padding: 3px 0 0; }
.copycar { margin-top: 42px; margin-left: -3px; }
.g-clip .label span { padding-left: 8px; }

.g-font { width: 292px; }
.g-font .rows { padding-left: 10px; }
.font1 { grid-template-columns: 144px 62px 30px 31px; justify-content: start; column-gap: 2px; }
.font2 { grid-template-columns: 30px 33px 30px 19px 7px 27px 21px 6px 29px 17px 38px 10px; justify-content: start; }
.ch { font-size: 16px; font-family: "Noto Sans", sans-serif; color: #333; margin-top: -2px; }
.it { font-family: "Liberation Serif", serif; font-size: 19px; }

.g-align { width: 405px; }
.al1 { grid-template-columns: 34px 32px 32px 4px 31px 12px 20px 17px 28px; justify-content: start; }
.al1 .up { margin-top: -10px; }
.al1 .down { margin-top: 10px; }
.al2 { grid-template-columns: 34px 32px 32px 4px 31px 33px; justify-content: start; }
.g-align .body > .rows:first-child { width: 221px; padding-left: 7px; }
.g-align .wrapcol { border-left: 1px solid #d0d0d0; padding: 1px 0 0 11px; margin-top: 7px; height: 78px; }
.wrapcol .r { display: flex; gap: 6px; font-size: 14.600px; letter-spacing: -0.300px; white-space: nowrap; }
.wrapcol .r span { min-width: 106px; }
.wrapic { margin-left: 2px; }
.wrapcol .car { margin-left: 9px; }

.g-num { width: 200px; }
.g-num .rows { padding-left: 10px; }
.num1 { grid-template-columns: 180px; }
.num2 { grid-template-columns: 28px 21px 36px 29px 6px 27px 36px; justify-content: start; }
.sym { font-size: 20px; color: #444; margin-top: -1px; }
.dec { font-size: 12px; fill: #444; letter-spacing: -0.800px; }

.g-styles { width: 243px; }
.g-styles .bigs { display: grid; grid-template-columns: 111px 54px 80px; justify-items: center; }
.g-cells { width: 180px; }
.g-cells .bigs { display: grid; grid-template-columns: 73px 34px 73px; justify-items: center; justify-content: center; }
.g-edit { width: 257px; }
.g-edit .body { display: grid; grid-template-columns: 132px 56px 58px; justify-items: center; }
.edits { width: 102px; margin-top: -2px; display: flex; flex-direction: column; gap: 2px; font-size: 14.600px; }
.edits div { height: 30px; display: flex; align-items: center; gap: 5px; }
.edits .far { margin-left: 10px; }
.g-add { width: 77px; }
.g-new { width: 75px; }
.g-add .body, .g-new .body { justify-content: center; }
.collapse { padding: 97px 0 0 17px; }

.qat { height: 43px; display: flex; align-items: center; background: #fafafa; padding-left: 9px; font-size: 13px; white-space: nowrap; letter-spacing: -0.350px; }
.qat span { margin-left: 5px; margin-top: -1px; }
.q1 { width: 49px; } .q2 { width: 46px; } .q3 { width: 44px; color: #b0b0b0; } .q4 { width: 48px; }
.q5 { width: 83px; letter-spacing: 0; } .q6 { width: 89px; letter-spacing: 0; }
.qc1 { margin-right: 15px; } .qc2 { margin-right: 13px; color: #aaa; }
.az { font-size: 13px; font-weight: 600; fill: #444; }
.blue { fill: #1e8bd8; }

.fbar { height: 47px; flex: none; display: flex; padding: 9px 0 0 10px; }
.fbar > div { height: 30px; background: #fff; border: 1px solid #d2d2d4; border-radius: 5px; display: flex; align-items: center; }
.namebox { width: 130px; justify-content: space-between; padding: 0 6px; font-size: 14.800px; }
.dots { margin: 8px 12px 0 10px; }
.fxbox { width: 91px; gap: 10px; padding-left: 7px; }
.fxbox i { font: italic bold 22px "Liberation Serif", serif; color: #444; margin-top: -4px; padding-left: 4px; }
.formula { width: 1648px; margin-left: 5px; justify-content: flex-end; gap: 10px; padding-right: 4px; font-size: 15.200px; }

.work { height: 641px; flex: none; display: flex; }
.sheet { width: 1895px; overflow: hidden; display: grid; grid-template-columns: 34px 167px 214px 108px 214px 222px 158px 108px 202px 98px 104px 183px 94px; grid-template-rows: 22px 28px; grid-auto-rows: 22px; background: #fff; font-size: 15.400px; letter-spacing: 0; color: #000; }
.sheet > div { white-space: pre; overflow: hidden; line-height: 21px; }
.colh { background: #efefef; text-align: center; color: #555; border-right: 1px solid #d0d0d0; border-bottom: 1px solid #9e9e9e; }
.colh.sel { background: #dfe1e1; color: #217346; border-bottom: 2px solid #107c41; }
.corner { background: linear-gradient(135deg, #efefef 50%, #d6d6d6 50%); border: 3px solid #efefef; border-left-width: 16px; }
.rowh { background: #efefef; text-align: center; color: #555; border-right: 1px solid #9e9e9e; border-bottom: 1px solid #d6d6d6; }
.rowh.first { padding-top: 5px; border-bottom-color: #9e9e9e; }
.rowh.sel { background: #dfe1e1; color: #217346; border-right: 2px solid #107c41; }
.c { border-right: 1px solid #000; border-bottom: 1px solid #000; text-align: right; padding-right: 8px; }
.sheet > .hd { font-weight: 700; font-size: 15.800px; color: #fff; background: #1f4e78; text-align: center; padding: 0; line-height: 28px; border-bottom-color: #9e9e9e; letter-spacing: -0.100px; }
.sheet > .s13 { font-size: 13.800px; letter-spacing: 0; }
.sheet > .s12 { font-size: 12.800px; letter-spacing: 0; }
.sheet > .hd.f { background: #a9d08e; color: #000; }
.sheet > .hd.red { background: #f00; }
.sheet > .hd.yel { background: #ff0; color: #000; }
.ar { text-align: center; padding: 0; font-size: 14px; }
.gr { background: #a9d08e; }
.lat { font-size: 15.400px; }
.arial { font-family: "Liberation Sans", "DejaVu Sans", sans-serif; font-size: 12.700px; }
.arial .lat { font-size: 16px; }
.arial.sm { font-size: 11.500px; }
.arial.sm .lat { font-size: 13.300px; }
.mid { text-align: center; padding: 0; }
.i { font: 14.900px "Liberation Sans", sans-serif; letter-spacing: -0.100px; }
.neg { padding-right: 3px; }
.sheet > .picked { overflow: visible; position: relative; outline: 2px solid #217346; outline-offset: -1px; box-shadow: inset 0 0 0 2px #fff; border-color: #217346; }
.picked::after { content: ""; position: absolute; right: -4px; bottom: -4px; width: 6px; height: 6px; background: #217346; border: 1px solid #fff; border-width: 1px 0 0 1px; }
.vscroll { width: 23px; display: flex; flex-direction: column; align-items: center; padding: 6px 0 0 1px; background: #f3f3f3; border-left: 1px solid #ddd; }
.vscroll i { width: 10px; height: 538px; border-radius: 5px; background: #707070; margin-top: 4px; }
.vscroll .dn { margin-top: 68px; }

.tabs { height: 40px; flex: none; display: flex; background: #ecedef; border-top: 1px solid #d6dadb; font-size: 17.500px; letter-spacing: 0; }
.nav { width: 141px; display: flex; gap: 32px; padding: 11px 0 0 32px; }
.tab { border-right: 1px solid #c4c4c4; height: 23px; margin-top: 8px; line-height: 23px; text-align: center; white-space: pre; }
.tab.cur { width: 109px; height: 36px; margin: -1px 5px 0 0; background: #fff; border: 0; border-radius: 0 0 6px 6px; font-size: 17px; font-weight: 600; letter-spacing: -0.350px; color: #222; display: flex; justify-content: center; box-shadow: 0 0 2px #0004; }
.cur span { height: 31px; line-height: 32px; border-bottom: 2px solid #107c41; }
.t1 { width: 141px; border-left: 1px solid #c4c4c4; } .t2 { width: 165px; } .t3 { width: 110px; } .t4 { width: 66px; } .t5 { width: 100px; } .t6 { width: 154px; } .t7 { width: 256px; }
.tab.t2, .tab.t3 { font-size: 18px; }
.tab.t6 { font-size: 18.500px; }
.plus { margin: 11px 0 0 52px; }
.vdots { margin: 12px 0 0 390px; }
.hscroll { width: 168px; height: 21px; margin: 8px 0 0 18px; background: #f6f6f6; border-radius: 10px; display: flex; align-items: center; padding-left: 6px; }
.hscroll i { width: 96px; height: 11px; border-radius: 5px; background: #707070; margin: 0 36px 0 6px; }

.status { height: 28px; flex: none; display: flex; align-items: center; background: #f4f4f4; border-top: 1px solid #fff; border-bottom: 1px solid #b4b8be; padding-left: 14px; font-size: 12.800px; letter-spacing: -0.300px; }
.ready { width: 61px; }
.status b { margin-left: 3px; width: 1200px; font-weight: 600; font-size: 13px; letter-spacing: -0.180px; }
.views { display: flex; margin-left: 251px; }
.v { width: 50px; height: 26px; display: grid; place-items: center; }
.v.on { background: #dedfdf; }
.zoom { margin-left: 6px; }
.pct { margin-left: 16px; font-size: 12.500px; }

.taskbar { height: 58px; flex: none; display: flex; align-items: center; background: linear-gradient(90deg, #e2effa 0, #e2eefa 28%, #d4dff6 38%, #d6dcf2 55%, #d5dff5 68%, #d6daef 75%, #e1ecf9 80%, #e2ecf9); }
.weather { width: 529px; flex: none; display: flex; padding-left: 28px; gap: 5px; line-height: 21px; font-size: 14.500px; letter-spacing: -0.400px; }
.weather div { display: flex; flex-direction: column; }
.weather .sub { color: #666; }
.apps { width: 870px; flex: none; display: flex; align-items: center; height: 58px; }
.tsearch { width: 271px; height: 39px; border-radius: 20px; background: #f1f5fd; border: 1px solid #cbd3e4; margin: 0 17px 0 18px; display: flex; align-items: center; padding-left: 13px; font-size: 16px; color: #555; }
.tsearch span { margin-left: 12px; width: 160px; }
.k { margin-right: 25.300px; }
.wa { margin: -8px 20px 0 -1px; }
.note { margin-right: 24px; margin-left: 2px; }
.active { width: 48px; height: 48px; margin: 0 16px 0 -5px; border-radius: 5px; background: #ebf1fb; display: grid; place-items: center; border-right: 2px solid #dfe5f1; box-shadow: inset 0 -1px #fff; }
.exp { margin-left: -1px; }
.snip { margin: 30px 0 0 2px; }
.tray { display: flex; align-items: center; margin-left: 205px; }
.eng { margin: 0 23px 0 27px; font-size: 14.500px; letter-spacing: -0.500px; }
.tray svg + svg { margin-left: 10px; }
.clock { width: 98px; display: flex; flex-direction: column; text-align: right; line-height: 20px; font-size: 14.700px; letter-spacing: -0.350px; margin-right: 11px; margin-top: -1px; }

.mark { position: absolute; left: 841px; top: 950px; fill: #b9bdbd; stroke: #b9bdbd; stroke-width: 0; opacity: .38; }
.m-ar { font: bold 66px "DejaVu Sans", sans-serif; letter-spacing: 0; stroke-width: 4px; stroke-linejoin: round; }
.m-en { font: bold 34px "Noto Sans", sans-serif; letter-spacing: 0; opacity: .75; }
```
FILE: sheet.js
```js
const heads = [
  ['SEALSMAN', ''], ['SEALSMAN', ''], ['الدين السابق', 's12'],
  ['التحويلات من 21/3 الى 31/3', 's13'], ['التسديدات من 21/3 الى  31/3', 's13'],
  ['المبلغ المطلوب تسديده', 'f s13'], ['SUPERVISOR', ''], ['Balance 3/21  till 12:00', 'red'],
  ['ERP Debit', 'red'], ['مبيعات يوم 31', 'red s13'], ['المبلغ مطلوب تسديده', 'red'], ['مطابقه', 'yel']
];
const M = 'محمد', N = 'مهند', H = 'حسن';
const rows = [
  ['احمد عادل حسين /الكرخ', 'احمد عادل حسين EVD', '8,031,457', '3,525,000', '9,686,750', '1,869,707', M, '1,690,221', '(232,452)', '411,375', '1,869,144', '563'],
  ['حيدر خضر مهدي / الكرخ', 'حيدر خضر مهدي EVD', '36,094,977', '6,700,000', '32,602,000', '10,192,977', N, '1,767,000', '7,822,071', '580,875', '10,169,946', '23,031'],
  ['خالد وليد حمدالله /الكرخ', 'خالد وليد EVD', '50,439,754', '10,650,000', '45,625,500', '15,464,254', N, '1,444,506', '13,123,854', '875,450', '15,443,810', '20,444'],
  ['زمن سعدي اسماعيل /الكرخ', 'زمن سعدي اسماعيل EVD', '17,446,132', '12,960,000', '26,793,000', '3,613,132', H, '5,456,282', '(2,378,299)', '515,550', '3,593,533', '19,599'],
  ['زيد فرج علي /الكرخ', 'زيد فرج EVD', '9,922,337', '9,150,000', '20,959,500', '-1,887,163', M, '4,235,382', '(6,955,787)', '832,600', '(1,887,805)', '642'],
  ['صالح عايد رشيد /الكرخ', 'صالح عايد EVD', '44,725,844', '15,395,000', '42,486,750', '17,634,094', N, '2,770,351', '13,700,144', '1,161,100', '17,631,595', '2,499'],
  ['عثمان خليل صكر /الكرخ', 'عثمان خليل صكر EVD', '12,749,629', '4,500,000', '12,150,000', '5,099,629', H, '859,798', '3,913,829', '305,525', '5,079,152', '20,477'],
  ['عمار صالح مهدي / الكرخ', 'عمار صالح مهدي EVD', '13,333,368', '22,350,000', '25,150,000', '10,533,368', H, '8,674,849', '338,224', '1,533,925', '10,546,998', '(13,630)'],
  ['عمار عادي رشيد /الكرخ', 'عمار عادي EVD', '53,476,538', '24,400,000', '54,677,500', '23,199,038', N, '2,584,862', '19,737,409', '853,675', '23,175,946', '23,092'],
  ['عمر جاسم محمد /الكرخ', 'عمر جاسم محمد EVD', '20,024,585', '6,350,000', '22,375,000', '3,999,585', H, '1,621,974', '1,755,995', '622,600', '4,000,569', '(984)'],
  ['كامل مهند كامل/الكرخ', 'كامل مهند كامل EVD', '5,927,451', '6,205,000', '5,063,000', '7,069,451', M, '3,413,950', '2,995,527', '627,600', '7,037,077', '32,374'],
  ['ليث عماد عبدالقادر /الكرخ', 'ليث عماد EVD', '4,397,946', '2,539,000', '5,008,250', '1,928,696', N, '1,533,719', '353,848', '88,650', '1,976,217', '(47,521)'],
  ['مثنى سعدون نايف/ الكرخ', 'مثنى سعدون EVD', '6,666,344', '1,750,000', '6,116,000', '2,300,344', M, '1,295,295', '833,572', '159,825', '2,288,692', '11,652'],
  ['محمد حاتم عبدالله / الكرخ', 'محمد حاتم عبدالله EVD', '7,506,077', '7,751,000', '14,500,000', '757,077', M, '3,202,926', '(2,842,375)', '353,950', '714,501', '42,576'],
  ['محمد حكمت عزت /الكرخ', 'محمد حكمت عزت EVD', '33,772,112', '10,650,000', '30,272,000', '14,150,112', N, '2,635,633', '11,024,237', '534,075', '14,193,945', '(43,833)'],
  ['محمد كريم خضير / الكرخ', 'محمد كريم خضير EVD', '21,455,000', '6,250,000', '18,495,000', '9,210,000', N, '609,621', '8,291,604', '311,825', '9,213,050', '(3,050)'],
  ['مصطفى صلاح مهدي /الكرخ', 'مصطفى صلاح مهدي EVD', '14,520,718', '10,050,000', '22,139,750', '2,430,968', M, '1,922,116', '(136,140)', '572,350', '2,358,326', '72,642'],
  ['نور فقار عطا الله  /الكرخ', 'نور فقار EVD', '6,150,000', '2,700,000', '8,850,000', '0', N, '1,809,355', '(1,914,617)', '97,325', '(7,937)', '7,937'],
  ['سيف حسام شمس/الكرخ', 'EVD سيف حسام شمس/الكرخ', '3,408,000', '3,500,000', '6,294,500', '613,500', N, '742,289', '(303,832)', '170,700', '609,157', '4,343'],
  ['احمد محمود مخلف/الكرخ', 'احمد محمود مخلف / الكرخ - EVD', '16,573,027', '13,520,075', '26,441,000', '3,652,102', H, '3,036,948', '(201,913)', '841,025', '3,676,060', '(23,958)'],
  ['طارق صالح علي/الكرخ', 'EVD طارق صالح علي', '7,913,625', '3,255,000', '7,613,000', '3,555,625', M, '1,521,976', '1,757,847', '294,950', '3,574,773', '(19,148)'],
  ['هشام جلوب جاسم /الكرخ', 'هشام جلوب جاسم EVD', '14,290,431', '10,975,000', '21,125,000', '4,140,431', H, '3,815,351', '(613,920)', '949,400', '4,150,831', '(10,400)'],
  ['علي حاتم حرج / الكرخ', 'EVD - علي حاتم حرج / الكرخ', '4,750,009', '3,480,000', '5,500,000', '2,730,009', M, '716,121', '1,866,561', '160,500', '2,743,182', '(13,173)'],
  ['محمد جاسم محمد  /الكرخ', 'EVD - محمد جاسم محمد  /الكرخ', '11,747,000', '3,880,000', '15,622,000', '5,000', H, '3,140,044', '(3,852,941)', '763,050', '50,153', '(45,153)'],
  ['محمد حازم جليل /الكرخ', 'EVD - محمد حازم جليل /الكرخ', '3,057,500', '4,391,000', '2,000,000', '5,448,500', M, '2,105,974', '3,084,879', '274,650', '5,465,503', '(17,003)'],
  ['تيسير فؤاد عبدالله  /الكرخ', 'EVD - تيسير فؤاد عبدالله  /الكرخ', '19,240,500', '10,500,000', '26,973,250', '2,767,250', M, '3,005,712', '(1,435,159)', '1,214,300', '2,784,853', '(17,603)'],
  ['ضياء احمد محمد  /الكرخ', 'EVD - ضياء احمد محمد  /الكرخ', '7,864,500', '4,375,000', '6,539,500', '5,700,000', H, '1,848,251', '3,531,682', '333,925', '5,713,858', '(13,858)']
];

const sheet = document.getElementById('sheet');
function add(cls, text, rtl) {
  const d = document.createElement('div');
  d.className = cls;
  d.textContent = text;
  if (rtl) d.dir = 'rtl';
  sheet.append(d);
  return d;
}

add('corner', '');
[...'ABCDEFGHIJKL'].forEach(l => add('colh' + (l === 'B' ? ' sel' : ''), l));
add('rowh first', '1');
heads.forEach(([t, cls]) => add('c hd ' + cls, t, /[\u0600-\u06ff]/.test(t)));

rows.forEach((row, n) => {
  add('rowh' + (n === 16 ? ' sel' : ''), n + 2);
  row.forEach((t, k) => {
    if (k < 2) {
      let cls = 'c ar gr';
      if (k === 1 && t.startsWith('EVD')) cls += n > 24 ? ' arial sm' : ' arial';
      if (k === 1 && n === 16) cls += ' picked';
      const cell = add(cls, t, true);
      if (k === 1) cell.innerHTML = t.replace('EVD', '<span class="lat">EVD</span>');
    } else if (k === 5) {
      add('c mid', 'د.ع. ' + (t[0] === '-' ? '\u200e' : '') + t, true);
    } else if (k === 6) {
      add('c ar', t, true);
    } else {
      add('c' + (k === 8 ? ' i' : '') + (t[0] === '(' ? ' neg' : ''), t);
    }
  });
});
```
